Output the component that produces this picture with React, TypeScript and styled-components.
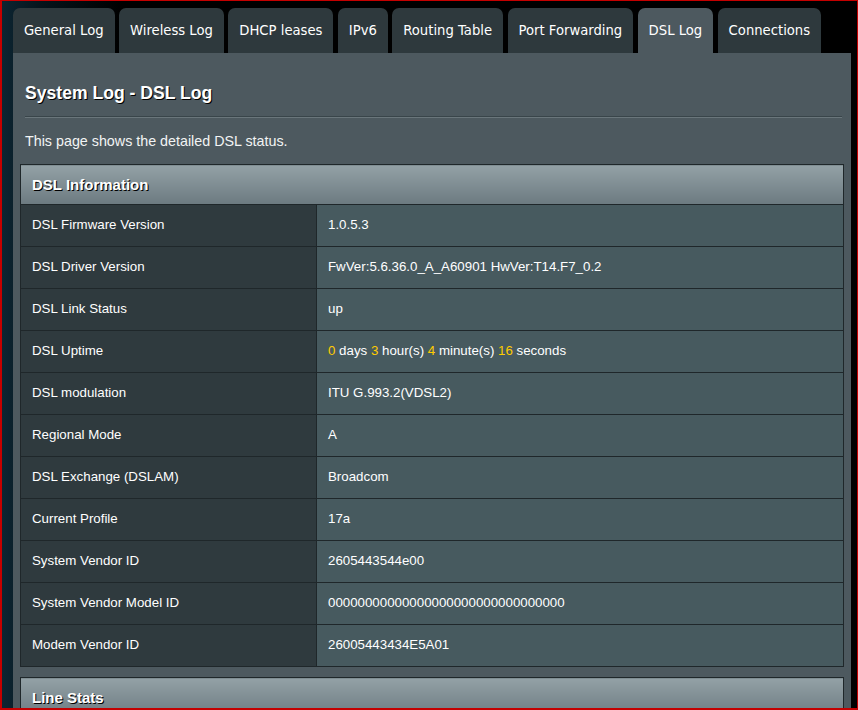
import React from "react";
import styled, { createGlobalStyle } from "styled-components";

const Global = createGlobalStyle`
  html, body { margin: 0; padding: 0; background: #000; }
  body { font-family: "Liberation Sans", Arial, sans-serif; }
`;

const Frame = styled.div`
  width: 858px;
  height: 710px;
  box-sizing: border-box;
  border-style: solid;
  border-color: #c40000;
  border-width: 1px 1px 2px 2px;
  overflow: hidden;
  background: linear-gradient(90deg, #0c2532 0px, #06141b 40px, #000 120px);
  padding: 7px 6px 0 11px;
`;

const TabBar = styled.div`
  display: flex;
  gap: 4.6px;
  height: 45px;
  align-items: flex-end;
`;

const Tab = styled.div<{ $active?: boolean }>`
  height: 45px;
  box-sizing: border-box;
  padding: 0 10.9px;
  display: flex;
  align-items: center;
  border-radius: 7px 7px 0 0;
  background: ${(p) => (p.$active ? "#4d595f" : "#2e393d")};
  color: #fff;
  font-family: "DejaVu Sans", Verdana, sans-serif;
  font-size: 13.2px;
  white-space: nowrap;
`;

const Panel = styled.div`
  background: #4d595f;
  padding: 0 7px 0 7px;
  height: 700px;
`;

const Title = styled.h1`
  margin: 0;
  padding: 27px 5px 0;
  font-size: 17.6px;
  font-weight: bold;
  color: #fff;
  text-shadow: 1px 1px 0 #000;
  height: 26px;
  line-height: 26px;
`;

const Rule = styled.div`
  margin: 10px 2px 0 5px;
  border-top: 1px solid #39454a;
  border-bottom: 1px solid #6a767b;
`;

const Intro = styled.p`
  margin: 0;
  padding: 14px 5px 0;
  font-size: 14.3px;
  line-height: 18px;
  color: #f2f4f4;
  height: 32px;
`;

const Table = styled.table<{ $gap?: boolean }>`
  width: 824px;
  border-collapse: collapse;
  margin-top: ${(p) => (p.$gap ? "10px" : "0")};
  font-size: 13.3px;
`;

const Head = styled.th`
  height: 38px;
  text-align: left;
  padding: 0 0 1px 11px;
  border: 1px solid #1f272a;
  background: linear-gradient(180deg, #93a1a6 0%, #6c7a80 100%);
  color: #fff;
  font-size: 15px;
  font-weight: bold;
  text-shadow: 1px 1px 0 #000;
`;

const Label = styled.td`
  width: 284px;
  height: 39px;
  padding: 0 0 2px 11px;
  border: 1px solid #1f272a;
  background: #2f3a3e;
  color: #fff;
  vertical-align: middle;
  line-height: 16px;
`;

const Value = styled.td`
  height: 40px;
  padding: 0 0 1px 11px;
  border: 1px solid #1f272a;
  background: #475a5f;
  color: #fff;
  vertical-align: middle;
  line-height: 16px;
`;

const Num = styled.span`
  color: #ffcc00;
`;

const rows: [string, React.ReactNode][] = [
  ["DSL Firmware Version", "1.0.5.3"],
  ["DSL Driver Version", "FwVer:5.6.36.0_A_A60901 HwVer:T14.F7_0.2"],
  ["DSL Link Status", "up"],
  [
    "DSL Uptime",
    <>
      <Num>0</Num> days <Num>3</Num> hour(s) <Num>4</Num> minute(s) <Num>16</Num> seconds
    </>,
  ],
  ["DSL modulation", "ITU G.993.2(VDSL2)"],
  ["Regional Mode", "A"],
  ["DSL Exchange (DSLAM)", "Broadcom"],
  ["Current Profile", "17a"],
  ["System Vendor ID", "2605443544e00"],
  ["System Vendor Model ID", "00000000000000000000000000000000"],
  ["Modem Vendor ID", "26005443434E5A01"],
];

const tabs = [
  "General Log",
  "Wireless Log",
  "DHCP leases",
  "IPv6",
  "Routing Table",
  "Port Forwarding",
  "DSL Log",
  "Connections",
];

export default function App() {
  return (
    <>
      <Global />
      <Frame>
        <TabBar>
          {tabs.map((t) => (
            <Tab key={t} $active={t === "DSL Log"}>
              {t}
            </Tab>
          ))}
        </TabBar>
        <Panel>
          <Title>System Log - DSL Log</Title>
          <Rule />
          <Intro>This page shows the detailed DSL status.</Intro>
          <Table>
            <thead>
              <tr>
                <Head colSpan={2}>DSL Information</Head>
              </tr>
            </thead>
            <tbody>
              {rows.map(([k, v]) => (
                <tr key={k}>
                  <Label>{k}</Label>
                  <Value>{v}</Value>
                </tr>
              ))}
            </tbody>
          </Table>
          <Table $gap>
            <thead>
              <tr>
                <Head colSpan={2}>Line Stats</Head>
              </tr>
            </thead>
          </Table>
        </Panel>
      </Frame>
    </>
  );
}
